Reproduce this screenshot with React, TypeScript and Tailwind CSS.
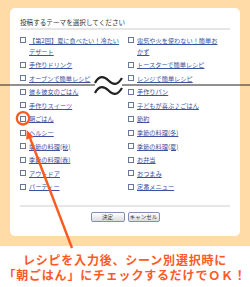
import React from 'react';

const leftItems: React.ReactNode[] = [
  <>【第2回】夏に食べたい！冷たい<br />デザート</>,
  '手作りドリンク',
  'オーブンで簡単レシピ',
  '彼＆彼女のごはん',
  '手作りスイーツ',
  '朝ごはん',
  'ヘルシー',
  '季節の料理(秋)',
  '季節の料理(春)',
  'アウトドア',
  'パーティー',
];

const rightItems: React.ReactNode[] = [
  <>電気や火を使わない！簡単お<br />かず</>,
  'トースターで簡単レシピ',
  'レンジで簡単レシピ',
  '手作りパン',
  '子どもが喜ぶ♪ごはん',
  '節約',
  '季節の料理(冬)',
  '季節の料理(夏)',
  'お弁当',
  'おつまみ',
  '定番メニュー',
];

const ThemeItem = ({ label }: { label: React.ReactNode }) => (
  <div className="flex items-start gap-[3px]">
    <span className="mt-[2.5px] w-[6px] h-[6px] shrink-0 border border-[#6a7898] bg-white"></span>
    <span className="whitespace-nowrap text-[#3d52a0] underline underline-offset-[1px] decoration-[#3d52a0]">
      {label}
    </span>
  </div>
);

export default function App() {
  return (
    <div className="relative w-[250px] h-[287px] overflow-hidden bg-white font-['Noto_Sans_CJK_JP',sans-serif]">
      {/* 投稿フォーム */}
      <div className="bg-[#ffdba8] pt-[8px] px-[10px] pb-[10px]">
        <div className="bg-white rounded-[5px] pt-[8px] px-[10px] pb-[14px]">
          <h2 className="text-[6.6px] leading-[12px] text-[#333] border-b-2 border-[#e6e6e6]">
            投稿するテーマを選択してください
          </h2>

          <div className="mt-[4.5px] grid grid-cols-[108px_1fr] text-[6.2px] leading-[11px]">
            <div className="flex flex-col gap-y-[2.6px]">
              {leftItems.map((item, i) => (
                <ThemeItem key={i} label={item} />
              ))}
            </div>
            <div className="flex flex-col gap-y-[2.6px]">
              {rightItems.map((item, i) => (
                <ThemeItem key={i} label={item} />
              ))}
            </div>
          </div>

          <div className="mt-[13px] border-t-2 border-[#e6e6e6] pt-[5px] flex justify-center gap-[3px]">
            <button className="w-[34px] h-[10px] rounded-[2px] border border-[#8090b0] bg-gradient-to-b from-white to-[#dcdcdc] text-[5.5px] leading-[8px] text-[#333]">
              決定
            </button>
            <button className="w-[32px] h-[10px] rounded-[2px] border border-[#8090b0] bg-gradient-to-b from-white to-[#dcdcdc] text-[5.5px] leading-[8px] text-[#333]">
              キャンセル
            </button>
          </div>
        </div>
      </div>

      {/* 説明文 */}
      <div className="pt-[6px] flex flex-col items-center text-[12px] leading-[15px] font-bold tracking-[0.8px] text-[#ff5a1f] whitespace-nowrap">
        <p>レシピを入力後、シーン別選択時に</p>
        <p>「朝ごはん」にチェックするだけでＯＫ！</p>
      </div>

      {/* 省略線・矢印 */}
      <svg className="absolute inset-0 pointer-events-none" width="250" height="287" viewBox="0 0 250 287">
        <line x1="0" y1="85" x2="95" y2="85" stroke="#222" strokeWidth="1" />
        <line x1="122" y1="85" x2="250" y2="85" stroke="#222" strokeWidth="1" />
        <path d="M95 83 C99 75, 104 76, 108.5 80.5 S117 86, 122 78" fill="none" stroke="#222" strokeWidth="2.2" />
        <path d="M95 93 C99 85, 104 86, 108.5 90.5 S117 96, 122 88" fill="none" stroke="#222" strokeWidth="2.2" />
        <circle cx="23" cy="118.3" r="6.2" fill="none" stroke="#ff5a1f" strokeWidth="2.3" />
        <line x1="72" y1="248" x2="30" y2="138" stroke="#ff5a1f" strokeWidth="2.4" />
        <polygon points="26.7,130 33.7,136.9 26.2,139.8" fill="#ff5a1f" />
      </svg>
    </div>
  );
}
